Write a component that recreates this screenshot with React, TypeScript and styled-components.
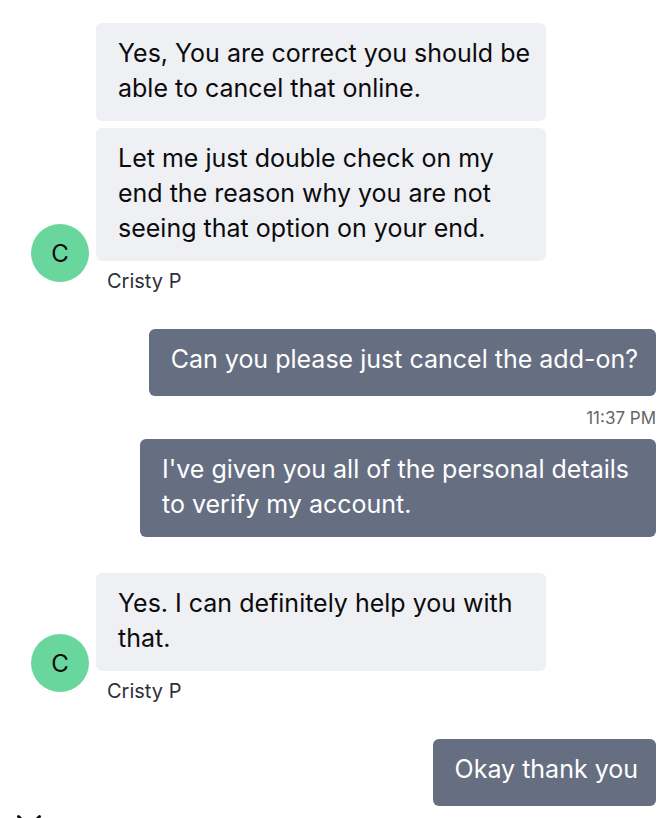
import React from "react";
import styled, { createGlobalStyle } from "styled-components";

const GlobalStyle = createGlobalStyle`
  * { box-sizing: border-box; }
  body { margin: 0; background: #fff; overflow: hidden; font-family: Inter, "Liberation Sans", sans-serif; }
  p { margin: 0; }
`;

const Chat = styled.main`
  display: flex;
  flex-direction: column;
  padding: 23px 14px 0 31px;
`;

const AgentGroup = styled.section<{ $spaced?: boolean }>`
  display: grid;
  grid-template-columns: 58px minmax(0, 450px);
  column-gap: 7px;
  margin-top: ${(p) => (p.$spaced ? "36px" : "0")};
`;

const Stack = styled.div`
  grid-column: 2;
  display: flex;
  flex-direction: column;
  gap: 7px;
`;

const Avatar = styled.div`
  grid-column: 1;
  grid-row: 1 / span 2;
  align-self: end;
  display: grid;
  place-items: center;
  width: 58px;
  height: 58px;
  margin-bottom: 12px;
  border-radius: 50%;
  background: #69d69d;
  color: #0b0b0d;
  font-size: 24px;
`;

const Bubble = styled.p<{ $own?: boolean }>`
  max-width: 516px;
  min-height: 67px;
  padding: ${(p) => (p.$own ? "13px 18px 15px 22px" : "13px 12px 15px 22px")};
  border-radius: 6px;
  background: ${(p) => (p.$own ? "#666e82" : "#eff0f4")};
  color: ${(p) => (p.$own ? "#fff" : "#0b0b0d")};
  font-size: 25px;
  line-height: 35px;
`;

const Name = styled.div`
  grid-column: 2;
  height: 33px;
  padding: 6px 11px 0;
  color: #2e3039;
  font-size: 20px;
  line-height: 28px;
`;

const OwnGroup = styled.section`
  display: flex;
  flex-direction: column;
  align-items: flex-end;
  margin-top: 35px;
`;

const Time = styled.time`
  margin: 12px 0 11px;
  color: #666;
  font-size: 17px;
  line-height: 20px;
`;

const Footer = styled.footer`
  display: flex;
  padding: 8px 16px;
`;

const CloseButton = styled.button`
  display: flex;
  padding: 0;
  border: 0;
  background: none;
  color: #0b0b0d;
`;

export default function App() {
  return (
    <>
      <GlobalStyle />
      <Chat>
        <AgentGroup>
          <Avatar>C</Avatar>
          <Stack>
            <Bubble>Yes, You are correct you should be able to cancel that online.</Bubble>
            <Bubble>
              Let me just double check on my end the reason why you are not seeing that option on
              your end.
            </Bubble>
          </Stack>
          <Name>Cristy P</Name>
        </AgentGroup>
        <OwnGroup>
          <Bubble $own>Can you please just cancel the add-on?</Bubble>
          <Time>11:37 PM</Time>
          <Bubble $own>
            I've given you all of the personal details to verify my account.
          </Bubble>
        </OwnGroup>
        <AgentGroup $spaced>
          <Avatar>C</Avatar>
          <Stack>
            <Bubble>Yes. I can definitely help you with that.</Bubble>
          </Stack>
          <Name>Cristy P</Name>
        </AgentGroup>
        <OwnGroup>
          <Bubble $own>Okay thank you</Bubble>
        </OwnGroup>
      </Chat>
      <Footer>
        <CloseButton type="button" aria-label="Close">
          <svg width="26" height="26" viewBox="0 0 26 26" fill="none" stroke="currentColor" strokeWidth="3" strokeLinecap="round">
            <path d="M2.5 2.5l21 21M23.5 2.5l-21 21" />
          </svg>
        </CloseButton>
      </Footer>
    </>
  );
}
